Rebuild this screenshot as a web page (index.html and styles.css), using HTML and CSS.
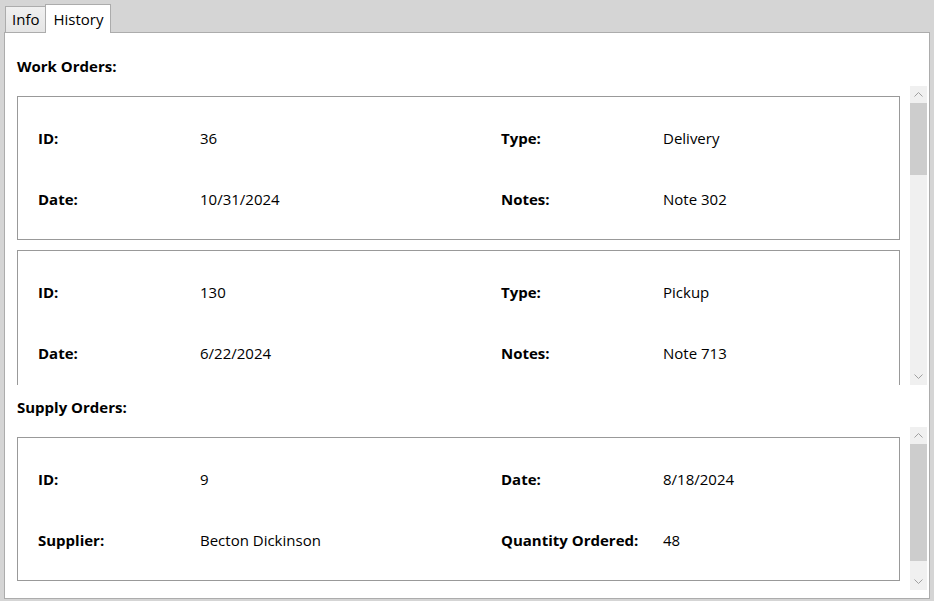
FILE: index.html
```html
<!DOCTYPE html>
<html>
<head>
<meta charset="utf-8">
<link rel="stylesheet" href="styles.css">
</head>
<body>
<div class="window">
  <div class="tabs">
    <div class="tab">Info</div>
    <div class="tab selected">History</div>
  </div>
  <div class="panel">
    <div class="heading">Work Orders:</div>
    <div class="scroller work">
      <div class="list">
        <div class="card">
          <div class="lbl">ID:</div><div class="val">36</div><div class="lbl">Type:</div><div class="val">Delivery</div>
          <div class="lbl">Date:</div><div class="val">10/31/2024</div><div class="lbl">Notes:</div><div class="val">Note 302</div>
        </div>
        <div class="card">
          <div class="lbl">ID:</div><div class="val">130</div><div class="lbl">Type:</div><div class="val">Pickup</div>
          <div class="lbl">Date:</div><div class="val">6/22/2024</div><div class="lbl">Notes:</div><div class="val">Note 713</div>
        </div>
        <div class="card">
          <div class="lbl">ID:</div><div class="val">214</div><div class="lbl">Type:</div><div class="val">Delivery</div>
          <div class="lbl">Date:</div><div class="val">3/14/2024</div><div class="lbl">Notes:</div><div class="val">Note 118</div>
        </div>
        <div class="card">
          <div class="lbl">ID:</div><div class="val">287</div><div class="lbl">Type:</div><div class="val">Pickup</div>
          <div class="lbl">Date:</div><div class="val">1/9/2024</div><div class="lbl">Notes:</div><div class="val">Note 450</div>
        </div>
        <div class="card">
          <div class="lbl">ID:</div><div class="val">341</div><div class="lbl">Type:</div><div class="val">Delivery</div>
          <div class="lbl">Date:</div><div class="val">11/27/2023</div><div class="lbl">Notes:</div><div class="val">Note 822</div>
        </div>
        <div class="card">
          <div class="lbl">ID:</div><div class="val">402</div><div class="lbl">Type:</div><div class="val">Pickup</div>
          <div class="lbl">Date:</div><div class="val">9/5/2023</div><div class="lbl">Notes:</div><div class="val">Note 96</div>
        </div>
        <div class="card">
          <div class="lbl">ID:</div><div class="val">455</div><div class="lbl">Type:</div><div class="val">Delivery</div>
          <div class="lbl">Date:</div><div class="val">7/18/2023</div><div class="lbl">Notes:</div><div class="val">Note 537</div>
        </div>
      </div>
      <div class="sbar">
        <div class="sbtn"><svg width="17" height="17" viewBox="0 0 17 17"><path d="M4.5 10.5 L8.5 6.5 L12.5 10.5" fill="none" stroke="#a0a0a0" stroke-width="1"/></svg></div>
        <div class="track"><div class="thumb thumb-work"></div></div>
        <div class="sbtn"><svg width="17" height="17" viewBox="0 0 17 17"><path d="M4.5 6.5 L8.5 10.5 L12.5 6.5" fill="none" stroke="#a0a0a0" stroke-width="1"/></svg></div>
      </div>
    </div>
    <div class="heading heading2">Supply Orders:</div>
    <div class="scroller supply">
      <div class="list">
        <div class="card">
          <div class="lbl">ID:</div><div class="val">9</div><div class="lbl">Date:</div><div class="val">8/18/2024</div>
          <div class="lbl">Supplier:</div><div class="val">Becton Dickinson</div><div class="lbl">Quantity Ordered:</div><div class="val">48</div>
        </div>
      </div>
      <div class="sbar">
        <div class="sbtn"><svg width="17" height="17" viewBox="0 0 17 17"><path d="M4.5 10.5 L8.5 6.5 L12.5 10.5" fill="none" stroke="#a0a0a0" stroke-width="1"/></svg></div>
        <div class="track"><div class="thumb thumb-supply"></div></div>
        <div class="sbtn"><svg width="17" height="17" viewBox="0 0 17 17"><path d="M4.5 6.5 L8.5 10.5 L12.5 6.5" fill="none" stroke="#a0a0a0" stroke-width="1"/></svg></div>
      </div>
    </div>
  </div>
</div>
</body>
</html>
```

FILE: styles.css
```css
* { box-sizing: border-box; }
html, body { margin: 0; padding: 0; }
body {
  background: #d5d5d5;
  font-family: "Open Sans", "Noto Sans", sans-serif;
  font-size: 15px;
  color: #000;
  width: 934px;
  height: 601px;
  overflow: hidden;
}
.window {
  padding: 4px 4px 2px 4px;
}
.tabs {
  display: flex;
  align-items: flex-end;
  height: 28px;
  padding-left: 1px;
}
.tab {
  height: 26px;
  padding: 0 6px 0 6px;
  border: 1px solid #acacac;
  border-bottom: none;
  border-right: none;
  background: linear-gradient(#f0f0f0, #e5e5e5);
  line-height: 24px;
  font-size: 15px;
}
.tab.selected {
  height: 29px;
  margin-bottom: -1px;
  background: #fff;
  border-right: 1px solid #acacac;
  padding: 0 7px 0 7px;
  line-height: 28px;
  position: relative;
  z-index: 1;
}
.panel {
  height: 567px;
  border: 1px solid #acacac;
  background: #fff;
  padding: 23px 2px 8px 12px;
  display: flex;
  flex-direction: column;
}
.heading {
  font-weight: 700;
  line-height: 20px;
  height: 20px;
  margin-bottom: 10px;
}
.heading2 { margin-top: 12px; margin-bottom: 10px; }
.scroller {
  display: flex;
  overflow: hidden;
}
.scroller.work { height: 299px; }
.scroller.supply { height: 163px; }
.list {
  flex: 1;
  overflow: hidden;
  padding: 10px 10px 0 0;
  display: flex;
  flex-direction: column;
  gap: 10px;
}
.card {
  flex: none;
  border: 1px solid #999;
  height: 144px;
  padding: 31px 20px 30px 20px;
  display: grid;
  grid-template-columns: 162px 301px 162px 1fr;
  grid-template-rows: 20px 20px;
  row-gap: 41px;
  line-height: 20px;
}
.lbl { font-weight: 700; white-space: nowrap; }
.val { white-space: nowrap; }
.sbar {
  width: 17px;
  flex: none;
  background: #f0f0f0;
  display: flex;
  flex-direction: column;
}
.sbtn { height: 17px; flex: none; }
.sbtn svg { display: block; }
.track { flex: 1; }
.thumb { background: #cdcdcd; }
.thumb-work { height: 72px; }
.thumb-supply { height: 117px; }
```
